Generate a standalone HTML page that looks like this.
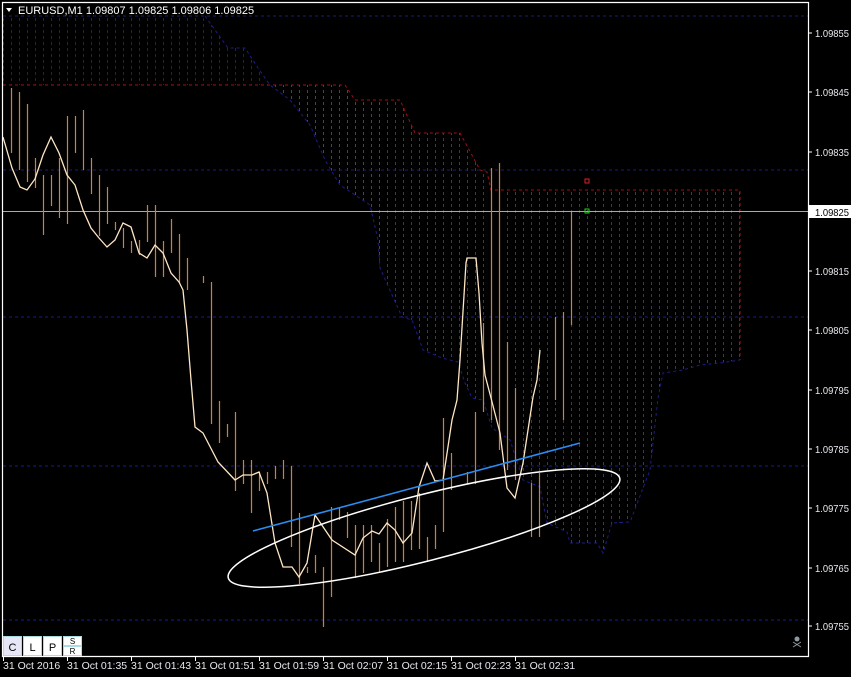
<!DOCTYPE html>
<html><head><meta charset="utf-8"><style>
html,body{margin:0;padding:0;background:#000;}
svg{display:block;font-family:"Liberation Sans",sans-serif;}
</style></head><body>
<svg width="851" height="677" viewBox="0 0 851 677" xmlns="http://www.w3.org/2000/svg">
<defs>
<pattern id="pb" x="3" y="0" width="8" height="6" patternUnits="userSpaceOnUse"><rect x="0" y="0" width="1" height="3" fill="#1c1c80"/></pattern>
<pattern id="pr" x="3" y="0" width="8" height="6" patternUnits="userSpaceOnUse"><rect x="0" y="0" width="1" height="3" fill="#a81010"/></pattern>
<pattern id="pg" x="3" y="0" width="8" height="6" patternUnits="userSpaceOnUse"><rect x="0" y="0" width="1" height="3" fill="#44446a"/></pattern>
</defs>
<rect width="851" height="677" fill="#000"/>
<polygon points="3,16 205,16 215,30 228,48 245,48 258,68 270,85 3,85" fill="url(#pb)"/>
<polygon points="270,85 345,85 355,100 380,100 380,268 378,240 370,205 340,185 325,160 310,125 290,100" fill="url(#pg)"/>
<polygon points="380,100 400,100 415,133 460,133 480,170 487,172 491,190 740,190 740,360 738,360 720,363 700,365 683,370 663,373 658,398 650,470 630,522 612,523 603,553 597,543 570,543 567,532 547,523 540,487 523,480 510,440 492,428 483,400 472,398 465,383 458,362 442,358 423,350 412,320 402,317 380,268" fill="url(#pr)"/>
<g fill="none" stroke-dasharray="3,3" stroke-width="1">
<polyline stroke="#1c1c8c" points="205,16 215,30 228,48 245,48 258,68 270,85 290,100 310,125 325,160 340,185 370,205 378,240 380,268 402,317 412,320 423,350 442,358 458,362 465,383 472,398 483,400 492,428 510,440 523,480 540,487 547,523 567,532 570,543 597,543 603,553 612,523 630,522 650,470 658,398 663,373 683,370 700,365 720,363 740,360"/>
<polyline stroke="#a01010" points="3,85 345,85 355,100 400,100 415,133 460,133 480,170 487,172 491,190 740,190 740,360"/>
<line x1="3" y1="16" x2="808" y2="16" stroke="#1c1c78"/>
<line x1="3" y1="170" x2="808" y2="170" stroke="#1c1c78"/>
<line x1="3" y1="317" x2="808" y2="317" stroke="#1c1c8c"/>
<line x1="3" y1="466" x2="808" y2="466" stroke="#1c1c8c"/>
<line x1="3" y1="620" x2="808" y2="620" stroke="#1c1c8c"/>
</g>
<line x1="3" y1="211.5" x2="808" y2="211.5" stroke="#a8a8b0" stroke-width="1"/>
<g stroke="#d0803c" stroke-width="1.2">
<line x1="11.5" y1="88" x2="11.5" y2="153"/><line x1="19.5" y1="92" x2="19.5" y2="170"/><line x1="27.5" y1="104" x2="27.5" y2="182"/><line x1="35.5" y1="158" x2="35.5" y2="188"/><line x1="43.5" y1="175" x2="43.5" y2="235"/><line x1="51.5" y1="175" x2="51.5" y2="206"/><line x1="59.5" y1="158" x2="59.5" y2="218"/><line x1="67.5" y1="116" x2="67.5" y2="224"/><line x1="75.5" y1="116" x2="75.5" y2="153"/><line x1="83.5" y1="110" x2="83.5" y2="170"/><line x1="91.5" y1="158" x2="91.5" y2="194"/><line x1="99.5" y1="175" x2="99.5" y2="236"/><line x1="107.5" y1="187" x2="107.5" y2="224"/><line x1="115.5" y1="222" x2="115.5" y2="230"/><line x1="123.5" y1="228" x2="123.5" y2="248"/><line x1="131.5" y1="241" x2="131.5" y2="253"/><line x1="139.5" y1="240" x2="139.5" y2="255"/><line x1="147.5" y1="205" x2="147.5" y2="242"/><line x1="155.5" y1="205" x2="155.5" y2="277"/><line x1="163.5" y1="241" x2="163.5" y2="277"/><line x1="171.5" y1="219" x2="171.5" y2="253"/><line x1="179.5" y1="234" x2="179.5" y2="283"/><line x1="187.5" y1="258" x2="187.5" y2="290"/><line x1="203.5" y1="276" x2="203.5" y2="283"/><line x1="211.5" y1="282" x2="211.5" y2="424"/><line x1="219.5" y1="401" x2="219.5" y2="443"/><line x1="227.5" y1="424" x2="227.5" y2="437"/><line x1="235.5" y1="412" x2="235.5" y2="491"/><line x1="243.5" y1="460" x2="243.5" y2="484"/><line x1="251.5" y1="460" x2="251.5" y2="513"/><line x1="259.5" y1="472" x2="259.5" y2="491"/><line x1="267.5" y1="472" x2="267.5" y2="484"/><line x1="275.5" y1="466" x2="275.5" y2="479"/><line x1="283.5" y1="460" x2="283.5" y2="479"/><line x1="291.5" y1="466" x2="291.5" y2="547"/><line x1="299.5" y1="513" x2="299.5" y2="584"/><line x1="307.5" y1="567" x2="307.5" y2="573"/><line x1="315.5" y1="555" x2="315.5" y2="573"/><line x1="323.5" y1="567" x2="323.5" y2="627"/><line x1="331.5" y1="507" x2="331.5" y2="597"/><line x1="339.5" y1="507" x2="339.5" y2="520"/><line x1="347.5" y1="512" x2="347.5" y2="538"/><line x1="355.5" y1="525" x2="355.5" y2="578"/><line x1="363.5" y1="525" x2="363.5" y2="573"/><line x1="371.5" y1="525" x2="371.5" y2="562"/><line x1="379.5" y1="543" x2="379.5" y2="573"/><line x1="387.5" y1="519" x2="387.5" y2="567"/><line x1="395.5" y1="507" x2="395.5" y2="562"/><line x1="403.5" y1="501" x2="403.5" y2="562"/><line x1="411.5" y1="501" x2="411.5" y2="550"/><line x1="419.5" y1="493" x2="419.5" y2="549"/><line x1="427.5" y1="537" x2="427.5" y2="562"/><line x1="435.5" y1="525" x2="435.5" y2="549"/><line x1="443.5" y1="418" x2="443.5" y2="532"/><line x1="451.5" y1="453" x2="451.5" y2="490"/><line x1="467.5" y1="472" x2="467.5" y2="484"/><line x1="475.5" y1="412" x2="475.5" y2="484"/><line x1="483.5" y1="323" x2="483.5" y2="412"/><line x1="491.5" y1="168" x2="491.5" y2="420"/><line x1="499.5" y1="163" x2="499.5" y2="450"/><line x1="507.5" y1="342" x2="507.5" y2="470"/><line x1="515.5" y1="388" x2="515.5" y2="480"/><line x1="531.5" y1="483" x2="531.5" y2="537"/><line x1="539.5" y1="473" x2="539.5" y2="537"/><line x1="555.5" y1="317" x2="555.5" y2="400"/><line x1="563.5" y1="312" x2="563.5" y2="420"/><line x1="571.5" y1="212" x2="571.5" y2="325"/>
</g>
<polyline fill="none" stroke="#ffe6c4" stroke-width="1.3" points="3,137 12,168 20,187 27,190 35,179 43,155 51,137 59,153 67,175 75,185 83,210 91,228 99,238 107,247 115,240 123,223 131,227 139,253 147,258 155,245 163,253 171,273 179,282 183,290 187,330 191,380 195,427 203,433 218,462 235,480 243,475 252,475 259,472 267,493 275,543 283,567 292,567 299,577 307,563 315,515 332,540 355,555 363,538 372,531 379,534 387,523 395,530 403,543 412,533 419,487 427,463 435,481 443,480 452,420 457,400 460,360 466,263 467,258 476,258 479,293 482,343 485,375 491,398 500,433 507,488 515,498 523,463 533,397 537,380 540,350"/>
<line x1="253" y1="531" x2="580" y2="443" stroke="#2a8cf0" stroke-width="1.6"/>
<ellipse cx="424" cy="528" rx="202" ry="33" transform="rotate(-14.3 424 528)" fill="none" stroke="#fff" stroke-width="1.5"/>
<rect x="585" y="179" width="4" height="4" fill="none" stroke="#e02020"/>
<rect x="585" y="209" width="4" height="4" fill="none" stroke="#20d020"/>
<path d="M2.5,2.5 H808.5 V656.5 H2.5 Z" fill="none" stroke="#fff" stroke-width="1.2"/>
<g stroke="#fff"><line x1="809" y1="33" x2="812" y2="33"/><line x1="809" y1="92" x2="812" y2="92"/><line x1="809" y1="152" x2="812" y2="152"/><line x1="809" y1="271" x2="812" y2="271"/><line x1="809" y1="330" x2="812" y2="330"/><line x1="809" y1="390" x2="812" y2="390"/><line x1="809" y1="449" x2="812" y2="449"/><line x1="809" y1="508" x2="812" y2="508"/><line x1="809" y1="568" x2="812" y2="568"/><line x1="809" y1="626" x2="812" y2="626"/>
<line x1="3.5" y1="656" x2="3.5" y2="661"/><line x1="67.5" y1="656" x2="67.5" y2="661"/><line x1="131.5" y1="656" x2="131.5" y2="661"/><line x1="195.5" y1="656" x2="195.5" y2="661"/><line x1="259.5" y1="656" x2="259.5" y2="661"/><line x1="323.5" y1="656" x2="323.5" y2="661"/><line x1="387.5" y1="656" x2="387.5" y2="661"/><line x1="451.5" y1="656" x2="451.5" y2="661"/><line x1="515.5" y1="656" x2="515.5" y2="661"/></g>
<g fill="#e8e8f0" font-size="10.5">
<text x="815" y="37" textLength="34" lengthAdjust="spacingAndGlyphs">1.09855</text><text x="815" y="96" textLength="34" lengthAdjust="spacingAndGlyphs">1.09845</text><text x="815" y="156" textLength="34" lengthAdjust="spacingAndGlyphs">1.09835</text><text x="815" y="275" textLength="34" lengthAdjust="spacingAndGlyphs">1.09815</text><text x="815" y="334" textLength="34" lengthAdjust="spacingAndGlyphs">1.09805</text><text x="815" y="394" textLength="34" lengthAdjust="spacingAndGlyphs">1.09795</text><text x="815" y="453" textLength="34" lengthAdjust="spacingAndGlyphs">1.09785</text><text x="815" y="512" textLength="34" lengthAdjust="spacingAndGlyphs">1.09775</text><text x="815" y="572" textLength="34" lengthAdjust="spacingAndGlyphs">1.09765</text><text x="815" y="630" textLength="34" lengthAdjust="spacingAndGlyphs">1.09755</text>
</g>
<rect x="809" y="205" width="42" height="13" fill="#fff"/>
<text x="815" y="216" font-size="10.5" fill="#000" textLength="34" lengthAdjust="spacingAndGlyphs">1.09825</text>
<g fill="#e8e8f0" font-size="10.5">
<text x="3" y="669">31 Oct 2016</text><text x="67" y="669">31 Oct 01:35</text><text x="131" y="669">31 Oct 01:43</text><text x="195" y="669">31 Oct 01:51</text><text x="259" y="669">31 Oct 01:59</text><text x="323" y="669">31 Oct 02:07</text><text x="387" y="669">31 Oct 02:15</text><text x="451" y="669">31 Oct 02:23</text><text x="515" y="669">31 Oct 02:31</text>
</g>
<polygon points="6,8 12,8 9,12" fill="#fff"/>
<text x="18" y="14" font-size="11" fill="#fff">EURUSD,M1  1.09807 1.09825 1.09806 1.09825</text>
<g stroke="#a8dce0" stroke-width="1">
<rect x="3.5" y="636.5" width="18" height="19" fill="#e6e6f6"/>
<rect x="23.5" y="636.5" width="18" height="19" fill="#fff"/>
<rect x="43.5" y="636.5" width="18" height="19" fill="#fff"/>
<rect x="63.5" y="636.5" width="18" height="9" fill="#fff"/>
<rect x="63.5" y="646.5" width="18" height="9" fill="#fff"/>
</g>
<g font-size="11" fill="#000" text-anchor="middle">
<text x="12.5" y="651">C</text><text x="32.5" y="651">L</text><text x="52.5" y="651">P</text>
<text x="72.5" y="644" font-size="8">S</text><text x="72.5" y="654" font-size="8">R</text>
</g>
<g fill="#9098a0" stroke="#9098a0">
<circle cx="797" cy="639" r="2.5" stroke="none"/>
<line x1="793" y1="642" x2="801" y2="647" stroke-width="1"/><line x1="801" y1="642" x2="793" y2="647" stroke-width="1"/>
</g>
</svg>
</body></html>
